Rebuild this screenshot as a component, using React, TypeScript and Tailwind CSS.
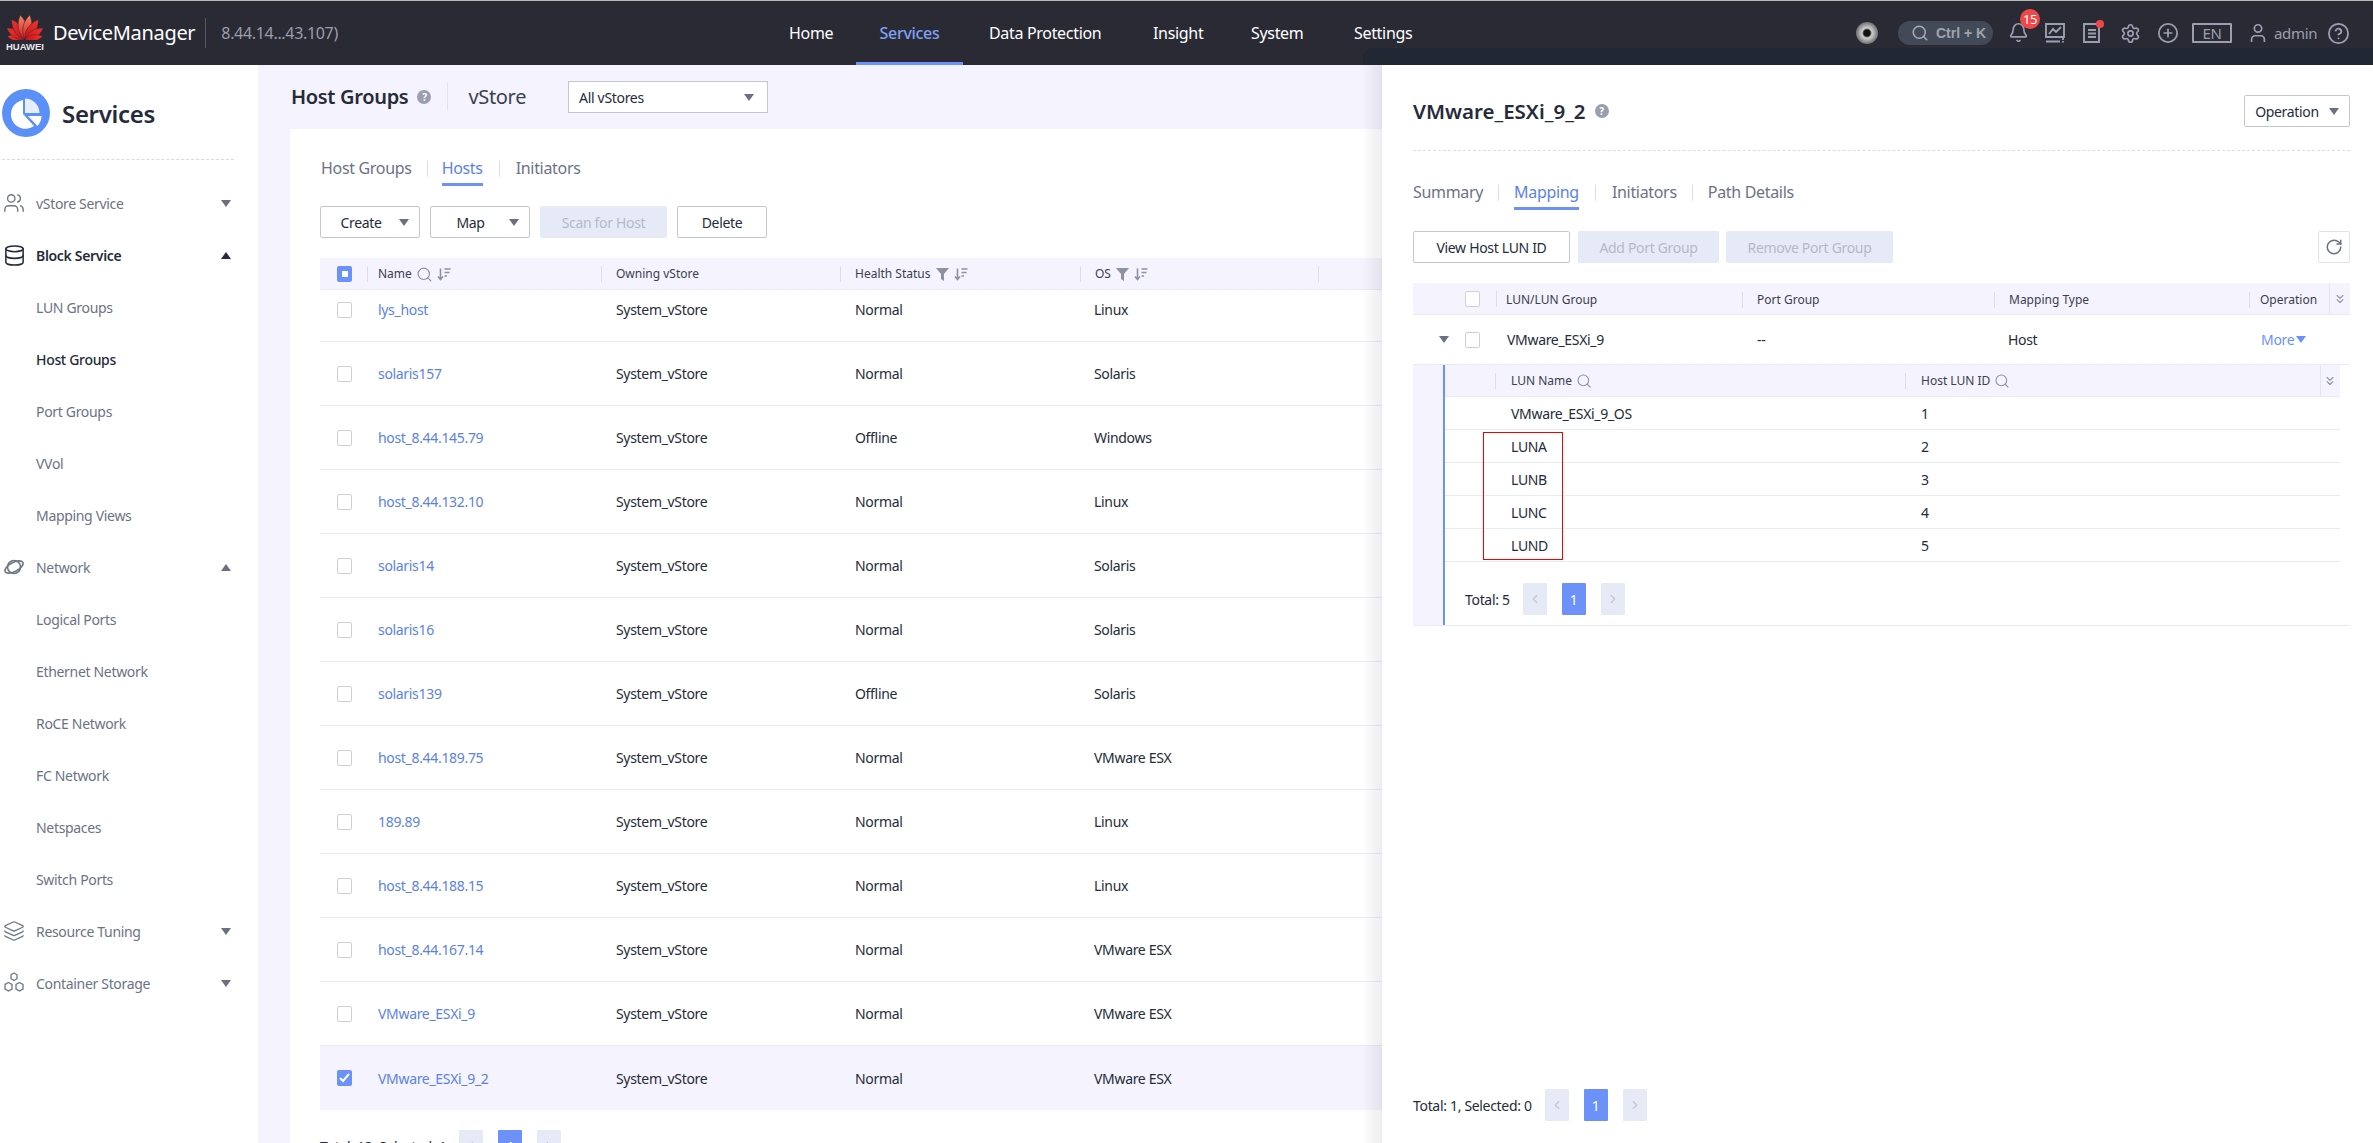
import { Bell, ChevronLeft, ChevronRight, ChevronsDown, CirclePlus, CircleHelp, Database, Layers, RotateCw, Search, Settings, User, Users } from 'lucide-react'

const hosts = [
  ['lys_host', 'Normal', 'Linux'],
  ['solaris157', 'Normal', 'Solaris'],
  ['host_8.44.145.79', 'Offline', 'Windows'],
  ['host_8.44.132.10', 'Normal', 'Linux'],
  ['solaris14', 'Normal', 'Solaris'],
  ['solaris16', 'Normal', 'Solaris'],
  ['solaris139', 'Offline', 'Solaris'],
  ['host_8.44.189.75', 'Normal', 'VMware ESX'],
  ['189.89', 'Normal', 'Linux'],
  ['host_8.44.188.15', 'Normal', 'Linux'],
  ['host_8.44.167.14', 'Normal', 'VMware ESX'],
  ['VMware_ESXi_9', 'Normal', 'VMware ESX'],
  ['VMware_ESXi_9_2', 'Normal', 'VMware ESX'],
]

const luns = [
  ['VMware_ESXi_9_OS', '1'],
  ['LUNA', '2'],
  ['LUNB', '3'],
  ['LUNC', '4'],
  ['LUND', '5'],
]

function Caret({ up, className = 'fill-[#6b7080]' }: { up?: boolean; className?: string }) {
  return (
    <svg width="10" height="7" viewBox="0 0 10 7" className={`shrink-0 ${className}`}>
      <polygon points={up ? '5,0 10,7 0,7' : '0,0 10,0 5,7'} />
    </svg>
  )
}

function SortIcon() {
  return (
    <svg width="14" height="14" viewBox="0 0 14 14" fill="none" stroke="#8d92a3" strokeWidth="1.6" className="shrink-0">
      <path d="M3.5 1.5v11M1 9.5l2.5 3 2.5-3M7.5 2h6M7.5 5.5h5M7.5 9h2.5" />
    </svg>
  )
}

function FilterIcon() {
  return (
    <svg width="13" height="14" viewBox="0 0 13 14" className="shrink-0 fill-[#8d92a3]">
      <polygon points="0,1 13,1 8,7 8,14 5,12 5,7" />
    </svg>
  )
}

function Sep({ className = 'mr-[14px]' }: { className?: string }) {
  return <span className={`w-px h-[16px] bg-[#dddde8] shrink-0 ${className}`} />
}

function Check({ state }: { state?: 'some' | 'all' }) {
  if (state === 'some') {
    return (
      <span className="w-[15px] h-[16px] rounded-[2px] bg-[#6c92fa] flex items-center justify-center shrink-0">
        <span className="w-[6px] h-[6px] bg-white" />
      </span>
    )
  }
  if (state === 'all') {
    return (
      <span className="w-[15px] h-[16px] rounded-[2px] bg-[#6c92fa] flex items-center justify-center shrink-0">
        <svg width="11" height="10" viewBox="0 0 11 10" fill="none" stroke="white" strokeWidth="2">
          <path d="M1 5l3 3 6-7" />
        </svg>
      </span>
    )
  }
  return <span className="w-[15px] h-[16px] rounded-[2px] border border-[#cfd0d8] bg-white shrink-0" />
}

function Btn({ label, caret, disabled, className }: { label: string; caret?: boolean; disabled?: boolean; className: string }) {
  return (
    <div
      className={`h-[32px] rounded-[2px] flex items-center justify-center text-[14px] ${className} ${
        disabled ? 'bg-[#e6eaf6] text-[#b4bac9]' : 'border border-[#c6c5d6] bg-white text-[#252b3a]'
      }`}
    >
      <span>{label}</span>
      {caret && <span className="ml-[17px] flex"><Caret /></span>}
    </div>
  )
}

function Pager() {
  return (
    <div className="flex gap-[15px]">
      <div className="w-[24px] h-[32px] rounded-[1px] bg-[#e6eaf6] flex items-center justify-center">
        <ChevronLeft size={14} className="text-[#c2c6d4]" />
      </div>
      <div className="w-[24px] h-[32px] rounded-[1px] bg-[#6c92fa] text-white text-[14px] flex items-center justify-center">1</div>
      <div className="w-[24px] h-[32px] rounded-[1px] bg-[#e6eaf6] flex items-center justify-center">
        <ChevronRight size={14} className="text-[#c2c6d4]" />
      </div>
    </div>
  )
}

function HuaweiLogo() {
  const petals = [
    { a: -80, s: 0.72 },
    { a: -58, s: 0.86 },
    { a: -34, s: 0.96 },
    { a: -11, s: 1 },
    { a: 11, s: 1 },
    { a: 34, s: 0.96 },
    { a: 58, s: 0.86 },
    { a: 80, s: 0.72 },
  ]
  return (
    <div className="w-[36px] flex flex-col items-center shrink-0">
      <svg width="36" height="26" viewBox="0 0 36 26">
        <defs>
          <linearGradient id="petalOuter" x1="0" y1="1" x2="0" y2="0">
            <stop offset="0" stopColor="#c9121a" />
            <stop offset="1" stopColor="#f0352c" />
          </linearGradient>
          <linearGradient id="petalInner" x1="0" y1="1" x2="0" y2="0">
            <stop offset="0" stopColor="#d81a1c" />
            <stop offset="1" stopColor="#f5866a" />
          </linearGradient>
        </defs>
        {petals.map(({ a, s }) => (
          <path
            key={a}
            d="M0 0C-6-7-5.5-17 0-25C5.5-17 6-7 0 0Z"
            fill={Math.abs(a) < 20 ? 'url(#petalInner)' : 'url(#petalOuter)'}
            stroke="#2a2a35"
            strokeWidth="0.5"
            transform={`translate(18 25.5) rotate(${a}) scale(${s})`}
          />
        ))}
      </svg>
      <span className="text-[9.5px] leading-[10px] font-bold text-[#e8e8ec] mt-[2px] tracking-normal font-['Liberation_Sans',sans-serif]">HUAWEI</span>
    </div>
  )
}

function ServicesIcon() {
  return (
    <svg width="48" height="48" viewBox="0 0 48 48" className="shrink-0">
      <circle cx="24" cy="24" r="24" fill="#5b90f8" />
      <path d="M21 11A14.5 14.5 0 1 0 32 37L21 25Z" fill="white" />
      <path d="M23 9.5A14.5 14.5 0 0 1 37.5 24H23Z" fill="#e6edfd" />
      <path d="M26 27H39.5A15 15 0 0 1 35.5 37Z" fill="white" />
    </svg>
  )
}

function PlanetIcon() {
  return (
    <svg width="22" height="22" viewBox="0 0 22 22" fill="none" stroke="#70758a" strokeWidth="1.6">
      <circle cx="11" cy="11" r="6.5" />
      <ellipse cx="11" cy="11" rx="10" ry="4.5" transform="rotate(-28 11 11)" />
    </svg>
  )
}

function HexIcon() {
  return (
    <svg width="22" height="22" viewBox="0 0 22 22" fill="none" stroke="#70758a" strokeWidth="1.3">
      <path d="M11 1l3 1.8v3.9L11 8.5 8 6.7V2.8Z" />
      <path d="M5.5 10.5l3.5 2v4.5l-3.5 2-3.5-2v-4.5Z" />
      <path d="M16.5 10.5l3.5 2v4.5l-3.5 2-3.5-2v-4.5Z" />
    </svg>
  )
}

function TopIcons() {
  return (
    <div className="flex items-center text-[#9a9fb0] absolute right-[23px] top-[20px] h-[24px]">
      <div className="w-[22px] h-[22px] rounded-full bg-[radial-gradient(circle_at_50%_50%,#111_0,#111_20%,#d0d0d0_32%,#5a5a5a_80%)] mr-[20px]" />
      <div className="w-[95px] h-[24px] rounded-full bg-[#434a57] flex items-center pl-[13px] mr-[15px]">
        <Search size={18} className="text-[#a6aab6]" />
        <span className="ml-[7px] text-[14px] font-semibold tracking-normal text-[#9fa3ae] font-['Liberation_Sans',sans-serif]">Ctrl + K</span>
      </div>
      <div className="relative w-[20px] h-[22px] mr-[17px]">
        <Bell size={21} strokeWidth={1.9} />
        <span className="absolute -top-[13px] left-[12px] w-[20px] h-[20px] rounded-full bg-[#f04848] text-white text-[13px] leading-[20px] text-center">15</span>
      </div>
      <svg width="20" height="20" viewBox="0 0 20 20" fill="none" stroke="currentColor" strokeWidth="1.9" className="mr-[17px]">
        <path d="M1 1h18v13H1zM1 18.5h14M18 15v2M18 18v1.5M4 11l4-5 3 3 5-5" />
      </svg>
      <div className="relative mr-[18px]">
        <svg width="20" height="20" viewBox="0 0 20 20" fill="none" stroke="currentColor" strokeWidth="1.9">
          <path d="M2 1h15v18H2zM6 7h8M6 10.5h8M6 14h8" />
        </svg>
        <span className="absolute -top-[3px] -right-[2px] w-[8px] h-[8px] rounded-full bg-[#f04848]" />
      </div>
      <Settings size={21} strokeWidth={1.9} className="mr-[16px]" />
      <CirclePlus size={22} strokeWidth={1.9} className="mr-[13px]" />
      <div className="w-[40px] h-[20px] border-2 border-[#9a9fb0] rounded-[1px] text-[15px] leading-[16px] text-center mr-[15px]">EN</div>
      <User size={22} strokeWidth={1.9} className="mr-[5px]" />
      <span className="w-[41px] text-[15px] mr-[12px] whitespace-nowrap">admin</span>
      <CircleHelp size={23} strokeWidth={1.9} />
    </div>
  )
}

function Header() {
  return (
    <header className="relative h-[65px] shrink-0 bg-[#2a2a35] border-t border-[#b8b8b8] flex items-center">
      <div className="w-[789px] shrink-0 flex items-center pl-[7px]">
        <HuaweiLogo />
        <span className="ml-[10px] text-[20px] text-white">DeviceManager</span>
        <span className="ml-[10px] w-px h-[30px] bg-[#555662]" />
        <span className="ml-[15px] text-[16px] text-[#9a9dab]">8.44.14...43.107)</span>
      </div>
      <nav className="self-stretch flex items-center text-[16px] text-white">
        <span className="w-[67px]">Home</span>
        <span className="w-[107px] self-stretch flex items-center justify-center text-[#7fa0f5] font-medium border-b-[3px] border-[#6c92fa] mr-[26px] pt-[3px]">Services</span>
        <span className="w-[164px]">Data Protection</span>
        <span className="w-[98px]">Insight</span>
        <span className="w-[103px]">System</span>
        <span>Settings</span>
      </nav>
      <TopIcons />
      <div className="absolute bottom-0 right-0 w-[1010px] h-[17px] bg-[#212733] rounded-tl-[10px]" />
    </header>
  )
}

type NavItem = { label: string; icon?: React.ReactNode; caret?: 'up' | 'down'; active?: boolean }

const navItems: NavItem[] = [
  { label: 'vStore Service', icon: <Users size={22} strokeWidth={1.5} className="text-[#70758a]" />, caret: 'down' },
  { label: 'Block Service', icon: <Database size={23} strokeWidth={1.6} className="text-[#252b3a]" />, caret: 'up', active: true },
  { label: 'LUN Groups' },
  { label: 'Host Groups', active: true },
  { label: 'Port Groups' },
  { label: 'VVol' },
  { label: 'Mapping Views' },
  { label: 'Network', icon: <PlanetIcon />, caret: 'up' },
  { label: 'Logical Ports' },
  { label: 'Ethernet Network' },
  { label: 'RoCE Network' },
  { label: 'FC Network' },
  { label: 'Netspaces' },
  { label: 'Switch Ports' },
  { label: 'Resource Tuning', icon: <Layers size={22} strokeWidth={1.4} className="text-[#70758a]" />, caret: 'down' },
  { label: 'Container Storage', icon: <HexIcon />, caret: 'down' },
]

function Sidebar() {
  return (
    <aside className="w-[258px] shrink-0 bg-white">
      <div className="ml-[2px] w-[232px] h-[95px] pt-[24px] border-b border-dashed border-[#d8d8e8] flex items-start">
        <ServicesIcon />
        <span className="ml-[12px] text-[24px] leading-[50px] font-semibold text-[#252b3a]">Services</span>
      </div>
      <div className="mt-[17px]">
        {navItems.map((item) => (
          <div key={item.label} className="h-[52px] flex items-center pl-[3px] pr-[27px]">
            <span className="w-[33px] shrink-0 flex items-center">{item.icon}</span>
            <span className={`text-[14px] ${item.active ? (item.caret ? 'font-semibold text-[#252b3a]' : 'font-medium text-[#252b3a]') : 'text-[#6c7286]'}`}>
              {item.label}
            </span>
            {item.caret && (
              <span className="ml-auto flex">
                <Caret up={item.caret === 'up'} className={item.active ? 'fill-[#252b3a]' : 'fill-[#6b7080]'} />
              </span>
            )}
          </div>
        ))}
      </div>
    </aside>
  )
}

function HostTable() {
  return (
    <div>
      <div className="h-[32px] bg-[#f5f3fd] border-b border-[#e8ebf5] grid grid-cols-[47px_234px_239px_240px_238px_1fr] items-center text-[12px] tracking-normal text-[#3a4050] pt-px">
        <div className="flex items-center pl-[17px]">
          <Check state="some" />
          <Sep className="ml-[15px]" />
        </div>
        <div className="flex items-center pl-[11px] gap-[4px]">
          <span>Name</span>
          <Search size={17} strokeWidth={1.6} className="text-[#8d92a3]" />
          <SortIcon />
        </div>
        <div className="flex items-center">
          <Sep />
          <span>Owning vStore</span>
        </div>
        <div className="flex items-center gap-[5px]">
          <Sep className="mr-[9px]" />
          <span>Health Status</span>
          <FilterIcon />
          <SortIcon />
        </div>
        <div className="flex items-center gap-[5px]">
          <Sep className="mr-[9px]" />
          <span>OS</span>
          <FilterIcon />
          <SortIcon />
        </div>
        <div className="flex items-center">
          <Sep />
        </div>
      </div>
      <div className="h-[820px] overflow-hidden">
        <div className="-mt-[12px]">
          {hosts.map(([name, health, os], i) => {
            const selected = i === hosts.length - 1
            return (
              <div
                key={name}
                className={`h-[64px] grid grid-cols-[47px_234px_239px_240px_238px_1fr] items-center text-[14px] text-[#252b3a] ${
                  selected ? 'bg-[#f5f3fd]' : 'border-b border-[#e8ebf5]'
                }`}
              >
                <div className="pl-[17px] flex"><Check state={selected ? 'all' : undefined} /></div>
                <div className="pl-[11px] text-[#5b82e8]">{name}</div>
                <div className="pl-[15px]">System_vStore</div>
                <div className="pl-[15px]">{health}</div>
                <div className="pl-[14px]">{os}</div>
                <div />
              </div>
            )
          })}
        </div>
      </div>
      <div className="mt-[20px] h-[32px] flex items-center gap-[13px] text-[14px] text-[#252b3a]">
        <span>Total: 13, Selected: 1</span>
        <Pager />
      </div>
    </div>
  )
}

function MappingPanel() {
  return (
    <section className="absolute top-0 bottom-0 right-0 w-[991px] bg-white pl-[31px] pr-[23px] flex flex-col text-[#252b3a]">
      <div className="absolute top-0 bottom-0 -left-[20px] w-[20px] bg-[linear-gradient(to_right,rgba(80,70,90,0),rgba(80,70,90,0.1))]" />
      <div className="h-[86px] pt-[30px] border-b border-dashed border-[#dcdce8] flex justify-between items-start shrink-0">
        <div className="h-[32px] flex items-center">
          <span className="text-[20.5px] font-semibold tracking-normal">VMware_ESXi_9_2</span>
          <span className="ml-[9px] w-[14px] h-[14px] rounded-full bg-[#9a9fb0] text-white text-[10px] font-bold leading-[14px] text-center">?</span>
        </div>
        <Btn label="Operation" caret className="w-[106px] [&>span:last-child]:ml-[10px]" />
      </div>

      <div className="mt-[27px] h-[32px] flex items-start text-[16px] text-[#6c7286]">
        <span className="h-[29px] leading-[29px]">Summary</span>
        <Sep className="mx-[15px] mt-[7px]" />
        <span className="h-[32px] leading-[29px] text-[#5b82e8] border-b-[3px] border-[#6c92fa]">Mapping</span>
        <Sep className="mx-[16px] mt-[7px]" />
        <span className="h-[29px] leading-[29px]">Initiators</span>
        <Sep className="mx-[15px] mt-[7px]" />
        <span className="h-[29px] leading-[29px]">Path Details</span>
      </div>

      <div className="mt-[21px] flex">
        <Btn label="View Host LUN ID" className="w-[157px]" />
        <Btn label="Add Port Group" disabled className="ml-[8px] w-[141px]" />
        <Btn label="Remove Port Group" disabled className="ml-[7px] w-[167px]" />
        <div className="ml-auto w-[32px] h-[32px] border border-[#e2e2ea] rounded-[2px] flex items-center justify-center">
          <RotateCw size={18} className="text-[#6b7080]" />
        </div>
      </div>

      <div className="mt-[20px] h-[32px] bg-[#f5f3fd] border-b border-[#e8ebf5] grid grid-cols-[83px_246px_252px_255px_80px_1fr] items-center text-[12px] tracking-normal text-[#3a4050]">
        <div className="pl-[52px] flex items-center">
          <Check />
          <Sep className="ml-[16px]" />
        </div>
        <div className="pl-[10px] pt-[2px]">LUN/LUN Group</div>
        <div className="flex items-center pt-[2px]"><Sep />Port Group</div>
        <div className="flex items-center pt-[2px]"><Sep />Mapping Type</div>
        <div className="flex items-center pt-[2px]"><Sep className="mr-[10px]" />Operation</div>
        <div className="flex items-center h-full border-l border-[#e4e4ee] pl-[3px]"><ChevronsDown size={14} strokeWidth={2} className="text-[#8d92a3]" /></div>
      </div>

      <div className="h-[50px] border-b border-[#e8ebf5] grid grid-cols-[83px_246px_252px_255px_1fr] items-center text-[14px]">
        <div className="pl-[26px] flex items-center">
          <Caret />
          <span className="ml-[16px] flex"><Check /></span>
        </div>
        <div className="pl-[11px]">VMware_ESXi_9</div>
        <div className="pl-[15px]">--</div>
        <div className="pl-[14px]">Host</div>
        <div className="pl-[12px] text-[#6c92fa] flex items-center gap-[2px]">More <Caret className="fill-[#6c92fa]" /></div>
      </div>

      <div className="h-[261px] border-b border-[#e8ebf5] bg-[#f5f3fd] pl-[30px] flex shrink-0">
        <div className="flex-1 border-l-2 border-[#6c92fa] bg-white">
          <div className="mr-[10px] h-[32px] bg-[#f5f3fd] border-b border-[#e8ebf5] grid grid-cols-[51px_409px_415px_1fr] items-center text-[12px] tracking-normal text-[#3a4050]">
            <div className="flex justify-end"><Sep className="mr-0" /></div>
            <div className="flex items-center pl-[15px] gap-[4px] pt-px">
              LUN Name
              <Search size={16} strokeWidth={1.6} className="text-[#8d92a3]" />
            </div>
            <div className="flex items-center gap-[4px] pt-px">
              <Sep className="mr-[11px]" />
              Host LUN ID
              <Search size={16} strokeWidth={1.6} className="text-[#8d92a3]" />
            </div>
            <div className="flex items-center h-full border-l border-[#e4e4ee] pl-[2px]"><ChevronsDown size={14} strokeWidth={2} className="text-[#8d92a3]" /></div>
          </div>
          <div className="relative mr-[10px]">
            {luns.map(([name, id]) => (
              <div key={name} className="h-[33px] border-b border-[#e8ebf5] grid grid-cols-[66px_409px_1fr] items-center text-[14px]">
                <div />
                <div>{name}</div>
                <div className="pl-[1px]">{id}</div>
              </div>
            ))}
            <div className="absolute left-[38px] top-[35px] w-[80px] h-[128px] border-[1.5px] border-[#f40000]" />
          </div>
          <div className="mt-[21px] pl-[20px] flex items-center text-[14px]">
            <span className="mr-[13px]">Total: 5</span>
            <Pager />
          </div>
        </div>
      </div>

      <div className="mt-auto mb-[22px] flex items-center text-[14px]">
        <span className="mr-[13px]">Total: 1, Selected: 0</span>
        <Pager />
      </div>
    </section>
  )
}

export default function App() {
  return (
    <div className="w-[2373px] h-[1143px] overflow-hidden flex flex-col font-['Noto_Sans',sans-serif] tracking-[-0.02em] bg-white">
      <Header />
      <div className="relative flex-1 flex min-h-0">
        <Sidebar />
        <main className="flex-1 min-w-0 bg-[#f5f3fd] flex flex-col pl-[32px]">
          <div className="h-[64px] shrink-0 flex items-center">
            <span className="ml-[1px] text-[20px] font-semibold text-[#252b3a]">Host Groups</span>
            <span className="ml-[9px] w-[14px] h-[14px] rounded-full bg-[#9a9fb0] text-white text-[10px] font-bold leading-[14px] text-center">?</span>
            <span className="ml-[16px] w-px h-[28px] bg-[#e4e2f0]" />
            <span className="ml-[20px] text-[20px] text-[#3a4050]">vStore</span>
            <div className="ml-[42px] w-[200px] h-[32px] border border-[#c6c5d6] bg-white flex items-center justify-between pl-[10px] pr-[13px] text-[14px] text-[#252b3a]">
              <span>All vStores</span>
              <Caret />
            </div>
          </div>
          <div className="flex-1 bg-white pl-[30px] min-h-0">
            <div className="mt-[25px] h-[32px] flex items-start text-[16px] text-[#6c7286]">
              <span className="ml-[1px] h-[29px] leading-[29px]">Host Groups</span>
              <Sep className="ml-[15px] mr-[14px] mt-[7px]" />
              <span className="h-[32px] leading-[29px] text-[#5b82e8] border-b-[3px] border-[#6c92fa]">Hosts</span>
              <Sep className="mx-[16px] mt-[7px]" />
              <span className="h-[29px] leading-[29px]">Initiators</span>
            </div>
            <div className="mt-[20px] flex gap-[10px] mb-[20px]">
              <Btn label="Create" caret className="w-[100px] pl-[9px]" />
              <Btn label="Map" caret className="w-[100px] pl-[15px] [&>span:last-child]:ml-[24px]" />
              <Btn label="Scan for Host" disabled className="w-[127px]" />
              <Btn label="Delete" className="w-[90px]" />
            </div>
            <HostTable />
          </div>
        </main>
        <MappingPanel />
      </div>
    </div>
  )
}
